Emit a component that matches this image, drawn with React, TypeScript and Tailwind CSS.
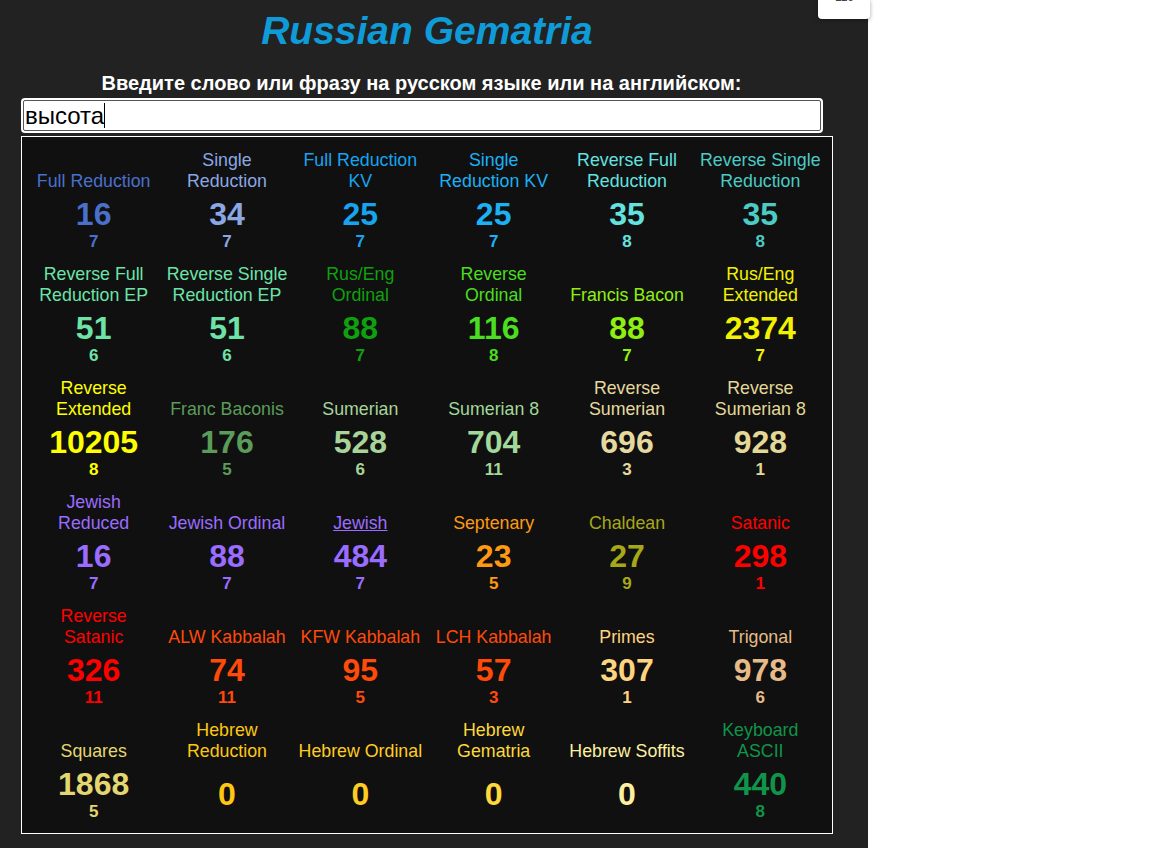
import React from "react";

type Cell = {
  label: string;
  value: number;
  digit?: number;
  color: string;
  underline?: boolean;
};

const cells: Cell[] = [
  { label: "Full Reduction", value: 16, digit: 7, color: "text-[#4a70cc]" },
  { label: "Single Reduction", value: 34, digit: 7, color: "text-[#8ba7e4]" },
  { label: "Full Reduction KV", value: 25, digit: 7, color: "text-[#16a4ee]" },
  { label: "Single Reduction KV", value: 25, digit: 7, color: "text-[#1cb0f5]" },
  { label: "Reverse Full Reduction", value: 35, digit: 8, color: "text-[#64e2e0]" },
  { label: "Reverse Single Reduction", value: 35, digit: 8, color: "text-[#4ccac4]" },

  { label: "Reverse Full Reduction EP", value: 51, digit: 6, color: "text-[#6de3a8]" },
  { label: "Reverse Single Reduction EP", value: 51, digit: 6, color: "text-[#6de3a8]" },
  { label: "Rus/Eng Ordinal", value: 88, digit: 7, color: "text-[#0fa00f]" },
  { label: "Reverse Ordinal", value: 116, digit: 8, color: "text-[#4add20]" },
  { label: "Francis Bacon", value: 88, digit: 7, color: "text-[#8ef010]" },
  { label: "Rus/Eng Extended", value: 2374, digit: 7, color: "text-[#f2f200]" },

  { label: "Reverse Extended", value: 10205, digit: 8, color: "text-[#ffff00]" },
  { label: "Franc Baconis", value: 176, digit: 5, color: "text-[#5b9c5b]" },
  { label: "Sumerian", value: 528, digit: 6, color: "text-[#a8d49a]" },
  { label: "Sumerian 8", value: 704, digit: 11, color: "text-[#a2d89a]" },
  { label: "Reverse Sumerian", value: 696, digit: 3, color: "text-[#e6d9a0]" },
  { label: "Reverse Sumerian 8", value: 928, digit: 1, color: "text-[#e3d898]" },

  { label: "Jewish Reduced", value: 16, digit: 7, color: "text-[#9a6cff]" },
  { label: "Jewish Ordinal", value: 88, digit: 7, color: "text-[#9a6cff]" },
  { label: "Jewish", value: 484, digit: 7, color: "text-[#9a6cff]", underline: true },
  { label: "Septenary", value: 23, digit: 5, color: "text-[#ff9a10]" },
  { label: "Chaldean", value: 27, digit: 9, color: "text-[#a6a817]" },
  { label: "Satanic", value: 298, digit: 1, color: "text-[#ff0000]" },

  { label: "Reverse Satanic", value: 326, digit: 11, color: "text-[#ff0000]" },
  { label: "ALW Kabbalah", value: 74, digit: 11, color: "text-[#ff4a0a]" },
  { label: "KFW Kabbalah", value: 95, digit: 5, color: "text-[#ff4a0a]" },
  { label: "LCH Kabbalah", value: 57, digit: 3, color: "text-[#ff4a0a]" },
  { label: "Primes", value: 307, digit: 1, color: "text-[#ffd47f]" },
  { label: "Trigonal", value: 978, digit: 6, color: "text-[#e6bb88]" },

  { label: "Squares", value: 1868, digit: 5, color: "text-[#e4d770]" },
  { label: "Hebrew Reduction", value: 0, color: "text-[#ffc711]" },
  { label: "Hebrew Ordinal", value: 0, color: "text-[#ffcc22]" },
  { label: "Hebrew Gematria", value: 0, color: "text-[#ffd83a]" },
  { label: "Hebrew Soffits", value: 0, color: "text-[#fff0a0]" },
  { label: "Keyboard\nASCII", value: 440, digit: 8, color: "text-[#10944a]" },
];

const CipherCell: React.FC<{ cell: Cell }> = ({ cell }) => (
  <div className={`flex flex-col items-center py-[6px] ${cell.color}`}>
    {/* label sits on the bottom of a two-line box */}
    <div className="h-[42px] flex items-end justify-center">
      <span
        className={`text-[17.8px] leading-[21px] text-center max-w-[128px] whitespace-pre-line ${
          cell.underline ? "underline" : ""
        }`}
      >
        {cell.label}
      </span>
    </div>
    <div className="mt-[4px] h-[56px] flex flex-col items-center justify-center">
      <span className="text-[32px] leading-[36px] font-bold">{cell.value}</span>
      {cell.digit !== undefined && (
        <span className="text-[17px] leading-[20px] font-bold">{cell.digit}</span>
      )}
    </div>
  </div>
);

export default function App() {
  return (
    <div className="min-h-screen bg-white font-['Liberation_Sans',Arial,sans-serif]">
      <div className="relative w-[868px] min-h-[848px] bg-[#222222]">
        {/* popup poking in from the top edge */}
        <div className="absolute left-[818px] top-0 w-[52px] h-[19px] bg-white rounded-b-[4px] shadow-[0_1px_4px_rgba(0,0,0,0.35)] overflow-hidden">
          <span className="block text-[12px] leading-[12px] text-[#444] pl-[17px] -mt-[9px]">119</span>
        </div>

        <div className="pl-[21px] w-[833px] flex flex-col">
          <h1 className="pt-[9px] text-center text-[39px] leading-[44px] font-bold italic text-[#0f9ad8]">
            Russian Gematria
          </h1>
          <div className="mt-[19px] w-[801px] text-center text-white font-bold text-[20px] leading-[23px]">
            Введите слово или фразу на русском языке или на английском:
          </div>
          <div className="mt-[3px] w-[802px] h-[35px] rounded-[4px] bg-white border-2 border-white">
            <div className="h-full rounded-[2px] border border-[#555] bg-white flex items-center pl-[1px] text-[24px] text-black">
              <span>высота</span>
              <span className="inline-block w-[1px] h-[25px] bg-black" />
            </div>
          </div>
          <div className="mt-[3px] w-[812px] border border-white bg-[#101010] px-[5px] pt-[7px] pb-[5px] grid grid-cols-6">
            {cells.map((c) => (
              <CipherCell key={c.label} cell={c} />
            ))}
          </div>
        </div>
      </div>
    </div>
  );
}
